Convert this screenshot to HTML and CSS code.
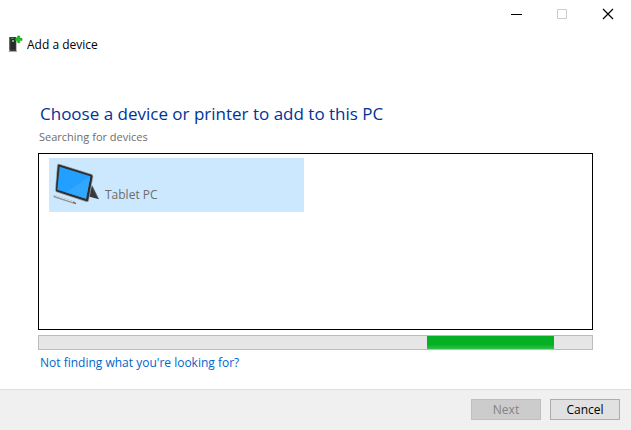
FILE: index.html
```
<!DOCTYPE html>
<html lang="en">
<head>
    <meta charset="utf-8">
    <title>Add a device</title>
    <link rel="stylesheet" href="styles.css">
</head>
<body>
    <div class="window-controls">
        <button type="button" aria-label="Minimize">
            <svg width="12" height="12" viewBox="0 0 12 12"><path d="M1 6.5h11" stroke="#000"/></svg>
        </button>
        <button type="button" aria-label="Maximize" disabled>
            <svg width="12" height="12" viewBox="0 0 12 12"><path d="M1.5 1.5h9v9h-9z" fill="none" stroke="#ccc"/></svg>
        </button>
        <button type="button" aria-label="Close">
            <svg width="12" height="12" viewBox="0 0 12 12"><path d="M1 1l10 10M11 1L1 11" stroke="#000" stroke-width="1.2"/></svg>
        </button>
    </div>

    <header class="title">
        <svg width="22" height="22" viewBox="0 0 66 66">
            <path d="M17 9h20v42H17z" fill="#3d3d3d"/>
            <path d="M20 12h14v34H20z" fill="#292929"/>
            <path d="M15 9h3v40h-3z" fill="#6a6a6a"/>
            <path d="M14 51h25v3H14z" fill="#a5a5a5"/>
            <path d="M21 13h8v2h-8z" fill="#999"/>
            <path d="M24 18h6v6h-6z" fill="#2ee54a"/>
            <path d="M41 6h6v7h7v6h-7v7h-6v-7h-7v-6h7z" fill="#1fc41f" stroke="#0c970c" stroke-width="2"/>
        </svg>
        <span>Add a device</span>
    </header>

    <main class="content">
        <h1>Choose a device or printer to add to this PC</h1>
        <p class="status">Searching for devices</p>

        <div class="device-list" role="listbox" aria-label="Devices">
            <div class="device" role="option" aria-selected="true">
                <svg width="52" height="48" viewBox="0 0 156 144">
                    <path d="M126 76l21 42-34-9z" fill="#34383c"/>
                    <path d="M128 82l16 33" stroke="#66696c" stroke-width="2"/>
                    <path d="M27 12l98 31q5 2 4 7l-13 71q-1 6-7 4L20 96q-4-2-4-6l6-75q1-4 5-3z" fill="#2d3033" stroke="#b9bdc0" stroke-width="2"/>
                    <path d="M29 20l92 29-13 67-86-27z" fill="#239fff"/>
                    <path d="M121 49l-13 67-60-19z" fill="#32a7ff"/>
                    <path d="M14 109l56 18" stroke="#8f969c" stroke-width="7" stroke-linecap="round"/>
                    <path d="M15 107l54 18" stroke="#dde2e5" stroke-width="3" stroke-linecap="round"/>
                    <path d="M70 127l8 4" stroke="#77606a" stroke-width="4"/>
                </svg>
                <span>Tablet PC</span>
            </div>
        </div>

        <div class="progress" role="progressbar" aria-label="Searching for devices">
            <div class="progress-chunk"></div>
        </div>
        <a class="help" href="#">Not finding what you're looking for?</a>
    </main>

    <footer class="actions">
        <button type="button" disabled>Next</button>
        <button type="button">Cancel</button>
    </footer>
</body>
</html>
```
FILE: styles.css
```
* {
    box-sizing: border-box;
}

body {
    margin: 0;
    min-height: 100vh;
    display: flex;
    flex-direction: column;
    background: #fff;
    color: #000;
    font-family: "Open Sans", "Noto Sans", sans-serif;
    font-size: 12px;
    line-height: 16px;
}

svg {
    display: block;
    flex-shrink: 0;
}

.window-controls {
    display: flex;
    justify-content: flex-end;
}

.window-controls button {
    display: flex;
    align-items: center;
    justify-content: center;
    width: 46px;
    height: 28px;
    padding: 0;
    border: none;
    background: none;
}

.title {
    display: flex;
    align-items: center;
    gap: 1px;
    padding: 6px 4px;
}

.content {
    flex: 1;
    display: flex;
    flex-direction: column;
    padding: 40px 38px 18px;
}

h1 {
    margin: 0 2px;
    color: #003399;
    font-size: 17px;
    font-weight: 400;
    line-height: 24px;
}

.status {
    margin: 3px 1px 8px;
    color: #6d6d6d;
    font-size: 11px;
}

.device-list {
    flex: 1;
    padding: 4px 10px;
    border: 1px solid #000;
}

.device {
    display: flex;
    align-items: flex-end;
    gap: 3px;
    width: 255px;
    max-width: 100%;
    height: 54px;
    padding: 4px 1px;
    background: #cce8ff;
    color: #6d6d6d;
}

.device span {
    padding-bottom: 5px;
}

.progress {
    height: 15px;
    margin-top: 5px;
    border: 1px solid #bcbcbc;
    background: #e6e6e6;
}

.progress-chunk {
    width: 23%;
    height: 100%;
    margin-left: 70.2%;
    background: linear-gradient(#06b025 65%, #2fc04a);
}

.help {
    align-self: flex-start;
    margin: 5px 2px 0;
    color: #0066cc;
    text-decoration: none;
}

.actions {
    display: flex;
    justify-content: flex-end;
    gap: 9px;
    padding: 9px 11px 10px;
    border-top: 1px solid #dfdfdf;
    background: #f0f0f0;
}

.actions button {
    width: 70px;
    height: 21px;
    padding: 0;
    border: 1px solid #adadad;
    background: #e1e1e1;
    color: #000;
    font: inherit;
}

.actions button:disabled {
    border-color: #bfbfbf;
    background: #ccc;
    color: #838383;
}
```
